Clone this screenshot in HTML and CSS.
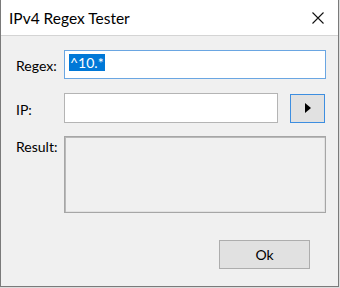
FILE: index.html
```html
<!DOCTYPE html>
<html>
<head>
<meta charset="utf-8">
<link rel="stylesheet" href="styles.css">
</head>
<body>
<div class="window">
  <div class="titlebar">
    <span class="title">IPv4 Regex Tester</span>
    <svg class="close" width="12" height="12" viewBox="0 0 12 12"><path d="M0.5 0.5 L11.5 11.5 M11.5 0.5 L0.5 11.5" stroke="#111" stroke-width="1.1" fill="none"/></svg>
  </div>
  <div class="content">
    <div class="row row-regex">
      <span class="label">Regex:</span>
      <div class="field focused"><span class="sel">^10.*</span></div>
    </div>
    <div class="row row-ip">
      <span class="label">IP:</span>
      <div class="field ip"></div>
      <div class="run"><svg width="6" height="10" viewBox="0 0 6 10"><polygon points="0,0 6,5 0,10" fill="#000"/></svg></div>
    </div>
    <div class="row row-result">
      <span class="label">Result:</span>
      <div class="result"></div>
    </div>
    <div class="footer">
      <div class="ok">Ok</div>
    </div>
  </div>
</div>
</body>
</html>
```
FILE: styles.css
```css
html, body {
  margin: 0;
  padding: 0;
  background: #dcdcdc;
}
body {
  font-family: Lato, "Noto Sans", sans-serif;
  font-size: 14px;
  color: #000;
}
.window {
  width: 337px;
  height: 286px;
  border: 1px solid #7a7a7a;
  border-top: none;
  background: #f0f0f0;
  display: flex;
  flex-direction: column;
}
.titlebar {
  height: 35px;
  background: #fff;
  border-bottom: 1px solid #d4d4d4;
  display: flex;
  align-items: center;
  padding-left: 8px;
  padding-right: 14px;
  justify-content: space-between;
}
.title {
  font-size: 15.5px;
  line-height: 20px;
  color: #000;
  margin-top: 1px;
}
.close {
  display: block;
}
.content {
  padding: 14px 12px 0 15px;
  display: flex;
  flex-direction: column;
}
.row {
  display: flex;
}
.label {
  width: 48px;
  flex: none;
  line-height: 20px;
}
.row-regex {
  height: 29px;
  align-items: center;
}
.row-regex .label {
  margin-top: 2px;
}
.row-ip {
  margin-top: 14px;
  height: 30px;
  align-items: center;
}
.row-ip .label {
  margin-top: 3px;
}
.row-result {
  margin-top: 13px;
}
.row-result .label {
  margin-top: 1px;
}
.field {
  box-sizing: border-box;
  background: #fff;
  border: 1px solid #b4b4b4;
  height: 29px;
  flex: 1;
  display: flex;
  align-items: center;
  padding-left: 4px;
}
.field.focused {
  border-color: #6aa6e2;
}
.field.ip {
  flex: none;
  width: 214px;
  height: 30px;
}
.sel {
  background: #0078d7;
  color: #fff;
  line-height: 17px;
  padding: 0 1px;
  margin-top: -5px;
}
.run {
  box-sizing: border-box;
  width: 35px;
  height: 29px;
  margin-left: 12px;
  border: 1px solid #3d8ee0;
  background: #e1e1e1;
  display: flex;
  align-items: center;
  justify-content: center;
}
.run svg {
  display: block;
  margin-left: 1px;
}
.result {
  box-sizing: border-box;
  flex: 1;
  height: 77px;
  border: 1px solid #a6a6a6;
  box-shadow: inset 1px 1px 0 #b9b9b9, inset -1px -1px 0 #e2e2e2;
  background: #f0f0f0;
}
.footer {
  display: flex;
  justify-content: flex-end;
  margin-top: 27px;
  padding-right: 16px;
}
.ok {
  box-sizing: border-box;
  width: 91px;
  height: 29px;
  border: 1px solid #adadad;
  background: #e1e1e1;
  display: flex;
  align-items: center;
  justify-content: center;
  line-height: 20px;
}
```
